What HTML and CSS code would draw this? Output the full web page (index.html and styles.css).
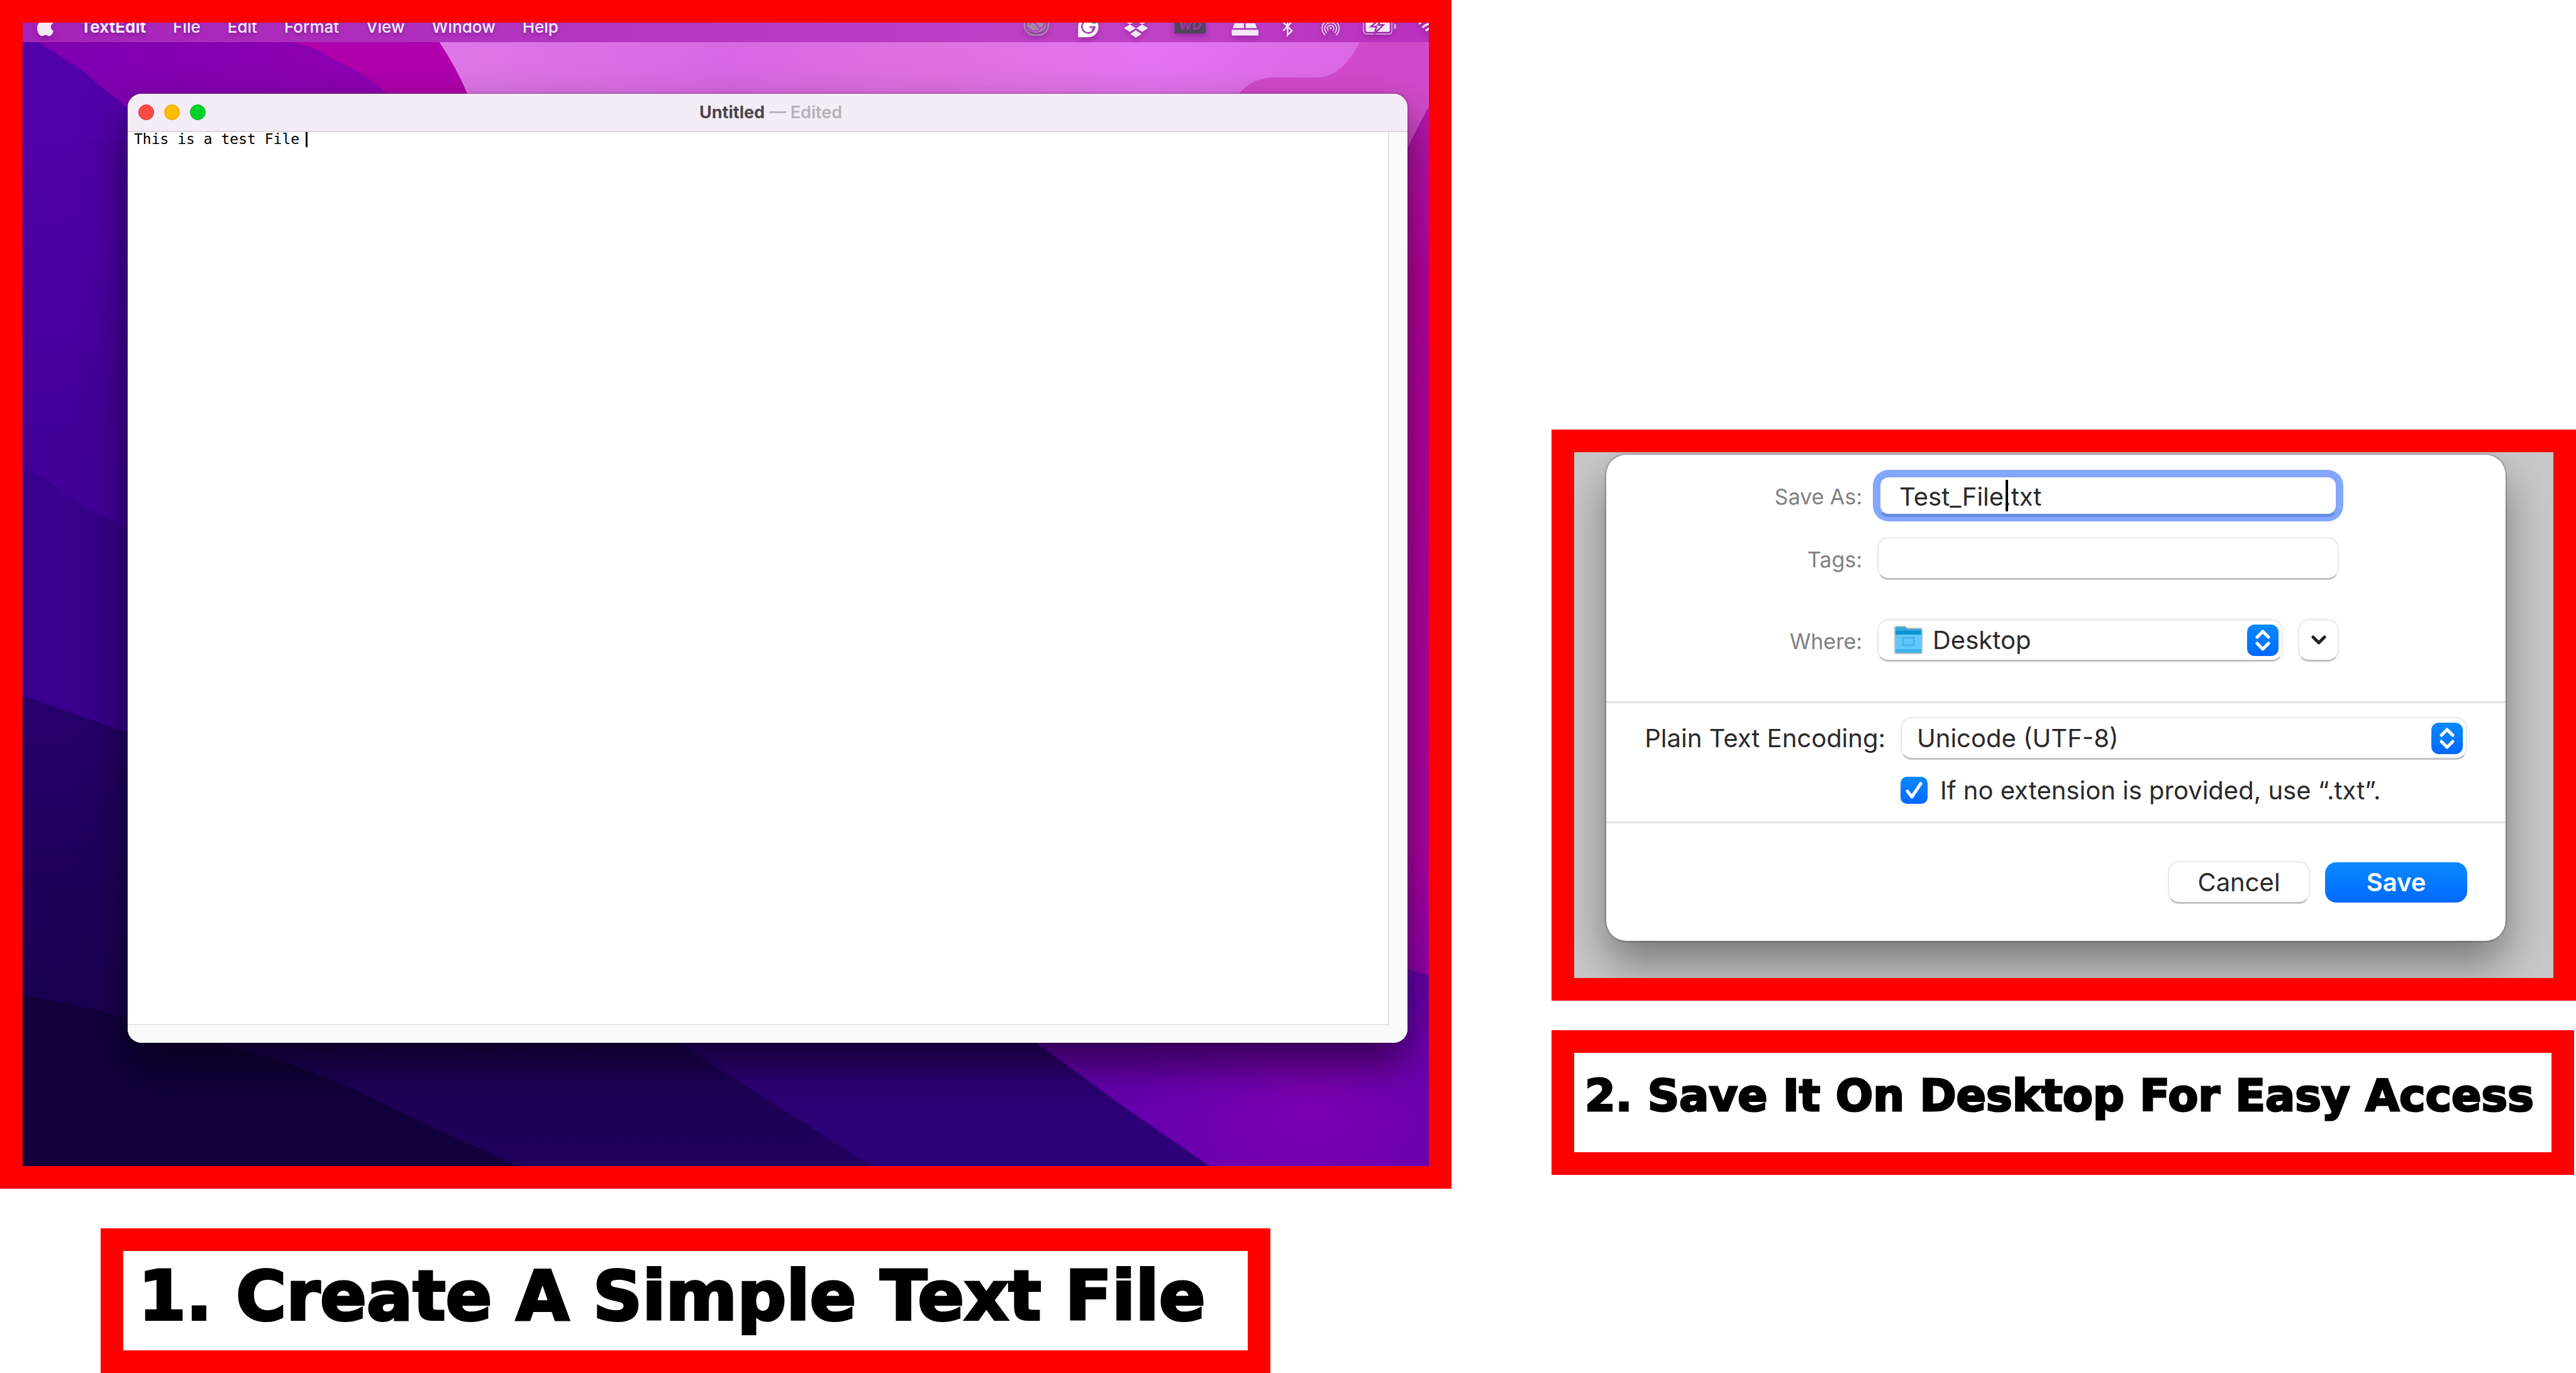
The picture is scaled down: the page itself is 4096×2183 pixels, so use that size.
FILE: index.html
```html
<!DOCTYPE html>
<html lang="en">
<head>
<meta charset="utf-8">
<title>Create and save a text file</title>
<link rel="stylesheet" href="styles.css">
</head>
<body>
<main class="guide">
  <section class="step">
    <div class="frame desktop">
      <svg class="wallpaper" viewBox="42 42 2598 2112" preserveAspectRatio="none" aria-hidden="true">
        <defs>
          <linearGradient id="indigo" x1="0" y1="0" x2="0" y2="1"><stop offset="0" stop-color="#5400ac"/><stop offset=".7" stop-color="#420098"/></linearGradient>
          <linearGradient id="violet" x1="0" y1="0" x2="1" y2="0"><stop offset="0" stop-color="#7c00b2"/><stop offset="1" stop-color="#9400b0"/></linearGradient>
          <linearGradient id="pink" x1="0" y1="0" x2="1" y2="0"><stop offset="0" stop-color="#de78e8"/><stop offset=".3" stop-color="#d868e4"/><stop offset=".5" stop-color="#e070e0"/><stop offset=".72" stop-color="#e474f0"/><stop offset="1" stop-color="#d864e0"/></linearGradient>
          <linearGradient id="magenta" x1="0" y1="0" x2="0" y2="1"><stop offset="0" stop-color="#b818b0"/><stop offset=".2" stop-color="#bc00a0"/><stop offset=".85" stop-color="#b400a8"/><stop offset="1" stop-color="#9400b0"/></linearGradient>
          <linearGradient id="navy" x1="0" y1="0" x2="0" y2="1"><stop offset="0" stop-color="#2e0078"/><stop offset=".6" stop-color="#26006a"/><stop offset=".85" stop-color="#1a0050"/><stop offset="1" stop-color="#20005c"/></linearGradient>
          <radialGradient id="glow" gradientUnits="userSpaceOnUse" cx="2420" cy="2020" r="330"><stop offset="0" stop-color="#7c00b4"/><stop offset="1" stop-color="#6600ae"/></radialGradient>
        </defs>
        <rect x="42" y="42" width="2598" height="2112" fill="url(#navy)"/>
        <path d="M42 42H300V1200L42 1200Z" fill="url(#indigo)"/>
        <path d="M42 858Q150 935 300 1015V1376L42 1285Z" fill="#38008c"/>
        <path d="M42 42H60L70 78Q126 117 182 157T300 260H900V42Z" fill="url(#violet)"/>
        <path d="M42 42H60L70 78C110 105 160 130 182 157C205 178 225 190 236 203L236 260H42Z" fill="#5200aa"/>
        <path d="M500 42L540 78C590 88 600 100 631 117C665 132 690 150 715 173L760 240H1000V42Z" fill="#b000ac"/>
        <path d="M800 42L812 78Q842 123 864 174L880 240H2640V42Z" fill="url(#pink)"/>
        <path d="M2520 42L2512 78C2495 112 2470 142 2435 143C2400 145 2370 141 2345 144C2315 147 2300 160 2289 174L2270 240V320H2640V42Z" fill="#d24acc"/>
        <path d="M2640 197Q2620 232 2601 273L2560 370V1778L2640 1803Z" fill="url(#magenta)"/>
        <path d="M42 1837Q220 1870 396 1927Q560 1965 689 2030L956 2154H42Z" fill="#12003c"/>
        <path d="M1180 1870L1257 1927Q1350 1990 1440 2045L1610 2154H2300V1870Z" fill="#2c0076"/>
        <path d="M1840 1870L1915 1927L2070 2040L2235 2154H2640V1803L2560 1778V1870Z" fill="url(#glow)"/>
      </svg>

      <header class="menubar">
        <svg class="icon" width="27" height="34" viewBox="0 0 32 40" aria-label="Apple"><path fill="#f4e8f6" d="M22 1c0 4-3 7-7 7 0-4 3-7 7-7zM16 11c2 0 4-2 7-2 3 0 6 1 7 4-6 4-5 12 1 14-2 6-5 10-8 10-3 0-4-2-7-2s-4 2-7 2C4 37 0 29 0 22 0 14 5 9 10 9c3 0 4 2 6 2z"/></svg>
        <nav class="menus" aria-label="Application menus">
          <button class="menu app" type="button">TextEdit</button>
          <button class="menu" type="button">File</button>
          <button class="menu" type="button">Edit</button>
          <button class="menu" type="button">Format</button>
          <button class="menu" type="button">View</button>
          <button class="menu" type="button">Window</button>
          <button class="menu" type="button">Help</button>
        </nav>
        <div class="status">
          <svg class="icon" width="49" height="34" viewBox="1888 30 57 40"><g fill="none" stroke="#a08ba6" stroke-width="3"><rect x="1891" y="27" width="45" height="38" rx="19"/></g><path fill="#a08ba6" d="M1900 34C1908 26 1932 30 1932 47C1930 62 1908 64 1898 56C1893 48 1896 40 1900 34Z"/><path d="M1897 50C1903 60 1914 58 1920 55M1901 45C1905 36 1912 42 1915 48C1920 57 1930 50 1928 42C1926 36 1920 34 1916 36" fill="none" stroke="#bb3fc3" stroke-width="3"/></svg>
          <svg class="icon" width="43" height="34" viewBox="1985 30 50 40"><path d="M1991 49A19 19 0 1 1 2010 69H1991Z" fill="#fff"/><path d="M2018 40A12 12 0 1 0 2022 50H2012M2022 50L2017 56" fill="none" stroke="#a640b2" stroke-width="3"/><path d="M2017 42H2025" stroke="#12a48c" stroke-width="3"/></svg>
          <svg class="icon" width="44" height="34" viewBox="2075 30 51 40"><path fill="#f4e8f6" d="M2087 32L2098 39L2087 45L2076 39ZM2110 32L2121 39L2110 45L2099 39ZM2087 45L2098 52L2087 59L2076 52ZM2110 45L2121 52L2110 59L2099 52ZM2098 56L2109 63L2098 70L2088 63Z"/></svg>
          <svg class="icon" width="57" height="34" viewBox="2166 30 66 40" aria-label="WD"><rect x="2170" y="28" width="58" height="34" rx="2" fill="#4d475c"/><text x="2199" y="55" class="drive-label">WD</text></svg>
          <svg class="icon" width="47" height="34" viewBox="2272 30 55 40"><path fill="#f4e8f6" d="M2281 43H2299V52H2278ZM2302 43H2320L2323 52H2302ZM2276 56Q2276 55 2278 55H2324Q2326 55 2326 57V64Q2326 66 2324 66H2278Q2276 66 2276 64Z"/></svg>
          <svg class="icon" width="26" height="34" viewBox="2367 30 30 40"><path d="M2372 41L2388 57L2380 65V31L2388 40L2372 57" fill="none" stroke="#f4e8f6" stroke-width="3"/></svg>
          <svg class="icon" width="37" height="34" viewBox="2437 30 43 40"><g fill="none" stroke="#ecd6ef" stroke-width="2"><path d="M2450 65A16 16 0 1 1 2470 65"/><path d="M2453 61A11 11 0 1 1 2467 61"/><path d="M2456 57A6 6 0 1 1 2464 57"/></g><circle cx="2460" cy="52" r="2" fill="#f4e8f6"/></svg>
          <svg class="icon" width="55" height="34" viewBox="2520 30 64 40"><rect x="2521" y="31" width="53" height="32" rx="6" fill="none" stroke="#dba4e0" stroke-width="2"/><rect x="2525" y="35" width="45" height="24" rx="3" fill="#f4e8f6"/><path d="M2578 43Q2582 44 2582 49T2578 54Z" fill="#dba4e0"/><path d="M2549 37L2535 49H2545L2542 62L2558 46H2548L2553 37Z" fill="#f4e8f6" stroke="#a030ac" stroke-width="3"/></svg>
          <svg class="icon" width="16" height="34" viewBox="2624 30 19 40"><g fill="none" stroke="#f4e8f6" stroke-width="4"><path d="M2624 44Q2634 34 2650 34"/><path d="M2631 51Q2639 43 2650 43"/><path d="M2637 57Q2643 52 2650 52"/></g></svg>
        </div>
      </header>

      <article class="window">
        <header class="titlebar">
          <div class="lights">
            <button class="light close" type="button" aria-label="Close"></button>
            <button class="light minimise" type="button" aria-label="Minimise"></button>
            <button class="light zoom" type="button" aria-label="Zoom"></button>
          </div>
          <p class="title"><b>Untitled</b> — Edited</p>
        </header>
        <div class="editor">
          <textarea class="document" aria-label="Document" spellcheck="false">This is a test File </textarea>
          <span class="caret document-caret"></span>
        </div>
      </article>
    </div>
    <h2 class="frame caption caption-large">1. Create A Simple Text File</h2>
  </section>

  <section class="step step-save">
    <div class="frame backdrop">
      <form class="dialog">
        <div class="fields">
          <div class="row">
            <label class="label" for="name">Save As:</label>
            <div class="control">
              <input class="input focused" id="name" type="text" value="Test_File.txt">
              <span class="caret name-caret"></span>
            </div>
          </div>
          <div class="row">
            <label class="label" for="tags">Tags:</label>
            <div class="control"><input class="input" id="tags" type="text"></div>
          </div>
          <div class="row row-where">
            <label class="label" for="where">Where:</label>
            <div class="where">
              <div class="picker">
                <select class="select with-icon" id="where"><option>Desktop</option></select>
                <svg class="folder" width="47" height="46" viewBox="0 0 47 46" aria-hidden="true"><path d="M2 3Q2 1 5 1H18L22 4H42Q45 4 45 7V42Q45 44 42 44H4Q2 44 2 42Z" fill="#2fa9dc" stroke="#b9bec1" stroke-width="2"/><path d="M3 8H44V15H3Z" fill="#0b93d2"/><path d="M3 14H44V41Q44 43 42 43H5Q3 43 3 41Z" fill="#62c8fb"/><path d="M3 37H44V41Q44 43 42 43H5Q3 43 3 41Z" fill="#3fb2ea"/><path d="M15 19H32V31H15ZM19 31H28" fill="none" stroke="#45b4ee" stroke-width="3"/></svg>
                <svg class="stepper" width="50" height="50" viewBox="0 0 50 50" aria-hidden="true"><rect width="50" height="50" rx="12" fill="url(#blue)"/><path d="M16 20L25 11L34 20M16 30L25 39L34 30" class="stroke"/></svg>
              </div>
              <button class="button expand" type="button" aria-label="Show more locations"><svg width="24" height="18" viewBox="0 0 24 18"><path d="M3 4L12 13L21 4" fill="none" stroke="#222" stroke-width="5" stroke-linecap="round" stroke-linejoin="round"/></svg></button>
            </div>
          </div>
        </div>

        <div class="encoding">
          <label class="encoding-label" for="encoding">Plain Text Encoding:</label>
          <div class="picker">
            <select class="select" id="encoding"><option>Unicode (UTF-8)</option></select>
            <svg class="stepper" width="50" height="50" viewBox="0 0 50 50" aria-hidden="true"><defs><linearGradient id="blue" x1="0" y1="0" x2="0" y2="1"><stop offset="0" stop-color="#0a8aff"/><stop offset="1" stop-color="#0068ff"/></linearGradient></defs><rect width="50" height="50" rx="12" fill="url(#blue)"/><path d="M16 20L25 11L34 20M16 30L25 39L34 30" class="stroke"/></svg>
          </div>
          <div class="extension">
            <span class="tick">
              <input class="checkbox" id="extension" type="checkbox" checked>
              <svg class="tick-mark" width="43" height="43" viewBox="0 0 43 43" aria-hidden="true"><path d="M11 23L18 32L32 11" class="stroke"/></svg>
            </span>
            <label for="extension">If no extension is provided, use “.txt”.</label>
          </div>
        </div>

        <div class="actions">
          <button class="button" type="button">Cancel</button>
          <button class="button primary" type="submit">Save</button>
        </div>
      </form>
    </div>
    <h2 class="frame caption">2. Save It On Desktop For Easy Access</h2>
  </section>
</main>
</body>
</html>
```
FILE: styles.css
```css
*, *::before, *::after { box-sizing: border-box; }

body {
  margin: 0;
  background: #fff;
  color: #2a2a2a;
  font-family: Inter, "Liberation Sans", sans-serif;
}

button, input, select, textarea { margin: 0; font: inherit; color: inherit; }

.guide {
  display: grid;
  grid-template-columns: 2308fr 1629fr;
  column-gap: 159px;
  align-items: start;
}

.frame { border: 36px solid #f00; }

/* Captions */
.caption {
  margin: 47px 3px 0 0;
  padding: 24px 17px 46px;
  color: #000;
  font-family: "DejaVu Sans", sans-serif;
  font-size: 70px;
  font-weight: 700;
  line-height: 88px;
  white-space: nowrap;
  -webkit-text-stroke: 3px #000;
}

.caption-large {
  margin: 63px 288px 0 160px;
  padding: 8px 24px 22px;
  font-size: 109px;
  line-height: 128px;
  -webkit-text-stroke-width: 4px;
}

/* Desktop */
.desktop { position: relative; overflow: hidden; }

.wallpaper { position: absolute; inset: 0; width: 100%; height: 100%; }

.menubar {
  position: relative;
  display: flex;
  align-items: center;
  gap: 42px;
  height: 49px;
  margin-top: -18px;
  padding-left: 23px;
  background: linear-gradient(90deg, #a422b8, #b436c0 40%, #c042c6 80%, #b830be);
}

.icon { display: block; flex: none; filter: drop-shadow(0 4px 4px rgba(60, 0, 80, .3)); }

.menus { display: flex; gap: 43px; }

.menu {
  padding: 0;
  border: 0;
  background: none;
  color: #f6eaf8;
  font-size: 26px;
  font-weight: 500;
  line-height: 48px;
  text-shadow: 0 4px 5px rgba(60, 0, 80, .3);
}

.menu.app { font-weight: 700; }

.status { display: flex; gap: 34px; margin-left: auto; }

.drive-label {
  fill: #a0389f;
  font-size: 24px;
  font-style: italic;
  font-weight: 800;
  text-anchor: middle;
}

.window {
  position: relative;
  margin: 82px 34px 196px 167px;
  border-radius: 22px;
  overflow: hidden;
  background: #fff;
  box-shadow: 0 0 2px 1px rgba(0, 0, 0, .3), 0 34px 70px rgba(0, 0, 0, .55);
}

.titlebar {
  display: grid;
  grid-template-columns: 1fr auto 1fr;
  align-items: center;
  height: 61px;
  padding: 0 17px;
  border-bottom: 2px solid #d8d4da;
  background: #f4ecf6;
}

.lights { display: flex; gap: 16px; }

.light { width: 25px; height: 25px; padding: 0; border: 1px solid; border-radius: 50%; }
.close { border-color: #ee2a24; background: #ff4a46; }
.minimise { border-color: #e8a000; background: #ffbd00; }
.zoom { border-color: #00b020; background: #00d22c; }

.title {
  margin: 0;
  padding-left: 10px;
  color: #b6b0b9;
  font-size: 27px;
  font-weight: 600;
  line-height: 32px;
}

.title b { color: #4a454c; font-weight: 700; }

.editor {
  position: relative;
  padding: 0 29px 28px 0;
  background: #fafafa;
}

.document {
  display: block;
  width: 100%;
  height: 1420px;
  padding: 0 10px;
  border: 0;
  border-right: 2px solid #e6e6e6;
  border-bottom: 2px solid #e6e6e6;
  outline: 0;
  resize: none;
  background: #fff;
  color: #000;
  font-family: "DejaVu Sans Mono", monospace;
  font-size: 23px;
  line-height: 22px;
}

.caret { position: absolute; background: #000; }
.document-caret { top: 0; left: 283px; width: 3px; height: 24px; }

/* Save dialog */
.step-save { padding-top: 683px; }

.backdrop { padding: 4px 76px 59px 51px; background: #c8c8c8; overflow: hidden; }

.dialog {
  border-radius: 32px;
  background: #fff;
  box-shadow: 0 0 3px 1px rgba(0, 0, 0, .35), 0 36px 70px rgba(0, 0, 0, .4);
  font-size: 40px;
  line-height: 48px;
}

.fields { display: grid; gap: 32px; padding: 31px 0 63px; }

.row {
  display: grid;
  grid-template-columns: 407px 734px;
  column-gap: 24px;
  align-items: center;
}

.row-where { padding-top: 30px; }

.label { padding-top: 4px; color: #808080; font-size: 34px; text-align: right; }

.control { position: relative; }

.input, .select, .button {
  display: block;
  height: 68px;
  border: 2px solid #e8e8e8;
  border-bottom: 3px solid #c2c2c2;
  border-radius: 18px;
  outline: 0;
  background: #fff;
}

.input { width: 100%; padding: 0 32px; }

.focused {
  padding: 2px 30px 0;
  border: 5px solid #84a5fc;
  border-bottom-color: #688ce2;
  box-shadow: 0 0 0 7px #84a8ff;
}

.name-caret { top: 9px; left: 204px; width: 4px; height: 50px; }

.where { display: grid; grid-template-columns: 1fr 65px; gap: 24px; }

.picker { display: grid; align-items: center; }
.picker > * { grid-area: 1 / 1; }

.select { width: 100%; padding: 0 24px; appearance: none; }
.with-icon { padding-left: 86px; }

.folder { margin-left: 26px; pointer-events: none; }
.stepper { justify-self: end; margin-right: 7px; pointer-events: none; }

.stroke {
  fill: none;
  stroke: #fff;
  stroke-width: 5;
  stroke-linecap: round;
  stroke-linejoin: round;
}

.button { width: 226px; padding: 0; text-align: center; }
.button.expand { display: grid; place-items: center; width: 100%; }

.encoding {
  display: grid;
  grid-template-columns: 444px 1fr;
  gap: 27px 24px;
  align-items: center;
  padding: 22px 61px 28px 0;
  border-top: 3px solid #e4e4e4;
  border-bottom: 3px solid #e4e4e4;
}

.encoding-label { text-align: right; white-space: nowrap; }

.extension {
  grid-column: 2;
  display: flex;
  align-items: center;
  gap: 20px;
  height: 43px;
  white-space: nowrap;
}

.tick { display: grid; }
.tick > * { grid-area: 1 / 1; }

.checkbox {
  width: 43px;
  height: 43px;
  border-radius: 10px;
  appearance: none;
  background: linear-gradient(#0a8aff, #0068ff);
}

.tick-mark { pointer-events: none; }

.actions {
  display: flex;
  justify-content: flex-end;
  align-items: center;
  gap: 24px;
  padding: 60px 61px 59px;
}

.button.primary {
  height: 64px;
  border: 0;
  background: linear-gradient(#0a8aff, #0068ff);
  color: #fff;
  font-weight: 600;
}
```
